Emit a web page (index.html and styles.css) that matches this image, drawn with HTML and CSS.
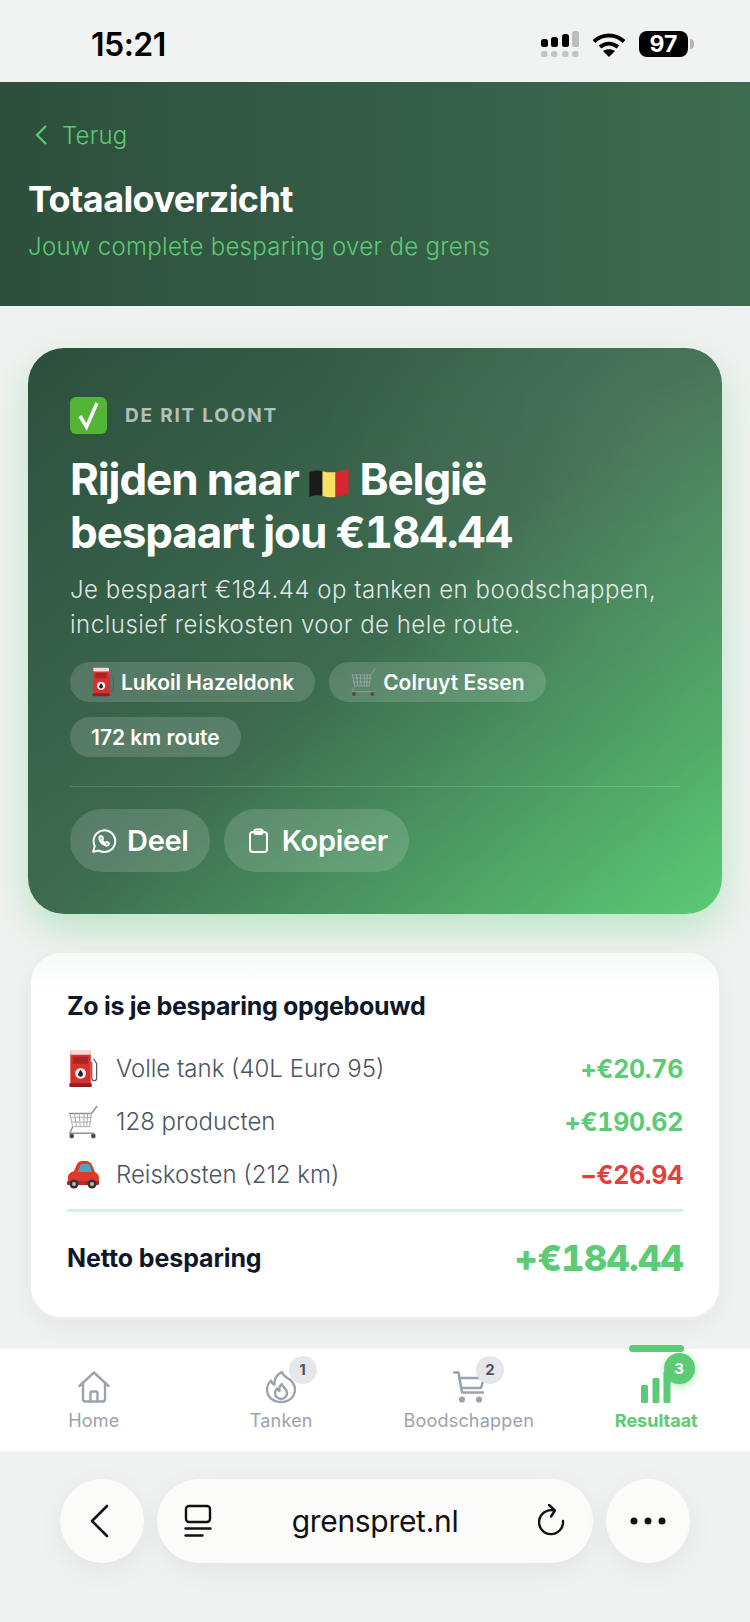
FILE: index.html
```html
<!DOCTYPE html>
<html lang="nl">
<head>
  <meta charset="UTF-8" />
  <meta name="viewport" content="width=device-width, initial-scale=1.0" />
  <title>Totaaloverzicht</title>
  <link rel="stylesheet" href="styles.css">
</head>
<body>
  <svg class="defs" width="0" height="0">
    <defs>
      <symbol id="pump" viewBox="0 0 32 40">
        <path d="M25 13v17a2.500 2.500 0 0 0 5 0V15l-3-5" fill="none" stroke="#56606a" stroke-width="1.300"/>
        <rect x="3" y="1" width="21" height="37" rx="2" fill="#d8302c"/>
        <rect x="3" y="1" width="21" height="5" rx="1" fill="#f1d9d6"/>
        <rect x="6" y="8" width="15" height="7" fill="#a92422"/>
        <rect x="2" y="35" width="23" height="4" rx="1" fill="#8f1e1d"/>
        <circle cx="13.500" cy="25" r="5.500" fill="#f5f2f0"/>
        <path d="M13.500 21.500c2 2.500 2.500 3.500 2.500 4.500a2.500 2.500 0 0 1-5 0c0-1 .5-2 2.500-4.500z" fill="#222"/>
      </symbol>
      <symbol id="cart" viewBox="0 0 34 36">
        <path d="M2 9h24l6-8" fill="none" stroke="#8b9096" stroke-width="1.500"/>
        <path d="M3 9l3 14h18l2-14M8 9l2 14M13 9l1 14M18 9l0 14M22 9l-1 14M4 13h22M4.500 18h20" fill="none" stroke="#a3a8ad" stroke-width="1"/>
        <path d="M6 23l-3 7h26" fill="none" stroke="#8b9096" stroke-width="1.500"/>
        <circle cx="5" cy="33" r="2.500" fill="#5a4a42"/>
        <circle cx="28" cy="33" r="2.500" fill="#5a4a42"/>
      </symbol>
    </defs>
  </svg>

  <div class="status-bar">
    <span class="clock">15:21</span>
    <div class="status-icons">
      <svg class="signal" width="38" height="26" viewBox="0 0 38 26">
        <rect x="0" y="8" width="7" height="8" rx="2.500" fill="#000"/>
        <rect x="10" y="6" width="7" height="10" rx="2.500" fill="#000"/>
        <rect x="21" y="3" width="7" height="13" rx="2.500" fill="#000"/>
        <rect x="31" y="0" width="7" height="16" rx="2.500" fill="#bdbdbd"/>
        <rect x="0" y="20" width="6.500" height="6" rx="2.500" fill="#c4c4c4"/>
        <rect x="10" y="20" width="6.500" height="6" rx="2.500" fill="#c4c4c4"/>
        <rect x="21" y="20" width="6.500" height="6" rx="2.500" fill="#c4c4c4"/>
        <rect x="31" y="20" width="6.500" height="6" rx="2.500" fill="#c4c4c4"/>
      </svg>
      <svg class="wifi" width="34" height="25" viewBox="0 0 34 25">
        <path d="M2 9.500C10.500 1.500 23.500 1.500 32 9.500" fill="none" stroke="#000" stroke-width="4"/>
        <path d="M8 15c5.500-4.500 12.500-4.500 18 0" fill="none" stroke="#000" stroke-width="4"/>
        <path d="M17 25l-6-6c3.500-2.500 8.500-2.500 12 0z" fill="#000"/>
      </svg>
      <div class="battery"><span class="battery-level">97</span><i class="battery-tip"></i></div>
    </div>
  </div>

  <header class="page-head">
    <a class="back-link">
      <svg width="15" height="22" viewBox="0 0 15 22"><path d="M12 2L3 11l9 9" fill="none" stroke="#5ccb75" stroke-width="2.200"/></svg>
      Terug
    </a>
    <h1>Totaaloverzicht</h1>
    <p>Jouw complete besparing over de grens</p>
  </header>

  <main class="content">
    <section class="hero">
      <div class="hero-tag">
        <svg width="37" height="37" viewBox="0 0 37 37">
          <rect width="37" height="37" rx="6" fill="#54b435"/>
          <path d="M10 19l6.500 11L27 6" fill="none" stroke="#fff" stroke-width="3.500"/>
        </svg>
        <span>DE RIT LOONT</span>
      </div>
      <h2>Rijden naar
        <svg class="flag" width="40" height="31" viewBox="0 0 38 30">
          <path d="M0 5c4-2 8-2 12.700-1v24C8 27 4 27 0 29z" fill="#1a1a1a"/>
          <path d="M12.700 4c4 1 8 1.500 12.600 1v24c-4.600.5-8.600 0-12.600-1z" fill="#f8e061"/>
          <path d="M25.300 5C30 4.500 34 3 38 2v24c-4 1-8 2.500-12.700 3z" fill="#d3282f"/>
        </svg>
        België<br>bespaart jou <span class="amount">€184.44</span></h2>
      <p class="hero-desc">Je bespaart €184.44 op tanken en boodschappen, inclusief reiskosten voor de hele route.</p>
      <div class="chips">
        <span class="chip"><svg width="24" height="34"><use href="#pump"/></svg>Lukoil Hazeldonk</span>
        <span class="chip"><svg width="27" height="34"><use href="#cart"/></svg>Colruyt Essen</span>
        <span class="chip">172 km route</span>
      </div>
      <div class="hero-actions">
        <button class="action" type="button">
          <svg width="26" height="26" viewBox="0 0 24 24" fill="none" stroke="#fff" stroke-width="1.800" stroke-linejoin="round" stroke-linecap="round"><path d="M2 22l1.500-5.300A10 10 0 1 1 7.400 20.800z"/><path d="M8.800 7.500c-1 .6-1.300 1.800-.8 3.200.9 2.500 3 4.500 5.300 5.300 1.400.5 2.700.1 3.200-.9l.3-1-2.400-1.200-1 1.200c-1.400-.5-2.700-1.700-3.300-3.200l1-1-1-2.400z"/></svg>
          Deel
        </button>
        <button class="action action-copy" type="button">
          <svg width="21" height="26" viewBox="0 0 21 26" fill="none" stroke="#fff" stroke-width="2" stroke-linejoin="round"><rect x="2" y="4" width="17" height="20" rx="3"/><rect x="6.500" y="1.500" width="8" height="4.500" rx="1.500"/></svg>
          Kopieer
        </button>
      </div>
    </section>

    <section class="breakdown">
      <h3>Zo is je besparing opgebouwd</h3>
      <ul class="rows">
        <li class="row">
          <svg class="row-icon" width="31" height="39"><use href="#pump"/></svg>
          <span class="row-label">Volle tank (40L Euro 95)</span>
          <span class="row-value">+€20.76</span>
        </li>
        <li class="row">
          <svg class="row-icon" width="31" height="36"><use href="#cart"/></svg>
          <span class="row-label">128 producten</span>
          <span class="row-value">+€190.62</span>
        </li>
        <li class="row">
          <svg class="row-icon" width="32" height="28" viewBox="0 0 32 28">
            <path d="M1 22v-6c0-3 3-5 6-6l3-7c1-2 3-3 5-3h4c3 0 5 2 6 4l3 7c2 1 4 3 4 6v5z" fill="#dd3a2a"/>
            <path d="M11 11l2-6c.5-1.500 1.500-2 3-2h4c1.500 0 2.500 .5 3 2l2 6z" fill="#4aa5c8"/>
            <rect x="0" y="20" width="32" height="4" rx="1" fill="#b32a20"/>
            <circle cx="7" cy="23" r="4.500" fill="#333"/><circle cx="7" cy="23" r="2" fill="#bbb"/>
            <circle cx="25" cy="23" r="4.500" fill="#333"/><circle cx="25" cy="23" r="2" fill="#bbb"/>
          </svg>
          <span class="row-label">Reiskosten (212 km)</span>
          <span class="row-value negative">−€26.94</span>
        </li>
      </ul>
      <div class="net">
        <span class="net-label">Netto besparing</span>
        <span class="net-value">+€184.44</span>
      </div>
    </section>
  </main>

  <nav class="tabbar">
    <a class="tab">
      <svg width="32" height="32" viewBox="0 0 32 32" fill="none" stroke="#9ca3af" stroke-width="2.400" stroke-linejoin="round" stroke-linecap="round"><path d="M1.500 15L16 1.500 30.500 15"/><path d="M5 12v16a2.500 2.500 0 0 0 2.500 2.500h17A2.500 2.500 0 0 0 27 28V12"/><path d="M12.500 30.500V22a1.500 1.500 0 0 1 1.500-1.500h4a1.500 1.500 0 0 1 1.500 1.500v8.500"/></svg>
      <span>Home</span>
    </a>
    <a class="tab">
      <span class="tab-badge">1</span>
      <svg width="30" height="32" viewBox="0 0 30 32" fill="none" stroke="#9ca3af" stroke-width="2.400" stroke-linejoin="round" stroke-linecap="round"><path d="M16 1c1 4 4 5 7 7 4 3 6 7 6 10.500C29 26 23 31 15 31S1 26 1 18.500c0-3.500 1.500-6.500 4-9 .5 2 1.500 3.500 3.500 4C8 8 11 3.500 16 1z"/><path d="M16 13c0 3 5 4 5 9a6 6 0 0 1-12 0c0-2 1-3.500 2.500-4.500.5 1.500 1 2 2 2.500-.5-2.500 .5-5.500 2.500-7z"/></svg>
      <span>Tanken</span>
    </a>
    <a class="tab">
      <span class="tab-badge">2</span>
      <svg width="32" height="32" viewBox="0 0 32 32" fill="none" stroke="#9ca3af" stroke-width="2.600" stroke-linejoin="round" stroke-linecap="round"><path d="M1 1.500h4.500L9 21.500h21"/><path d="M6 7h25l-3 10H8"/><circle cx="9" cy="28.500" r="1.800" fill="#9ca3af"/><circle cx="26" cy="28.500" r="1.800" fill="#9ca3af"/></svg>
      <span>Boodschappen</span>
    </a>
    <a class="tab tab-active">
      <i class="tab-marker"></i>
      <span class="tab-badge">3</span>
      <svg width="30" height="32" viewBox="0 0 30 32" fill="#5ccb75"><rect x="0" y="14" width="7" height="18" rx="1.500"/><rect x="11.500" y="7" width="7" height="25" rx="1.500"/><rect x="22.500" y="0" width="7" height="32" rx="1.500"/></svg>
      <span>Resultaat</span>
    </a>
  </nav>

  <div class="browser-bar">
    <button class="round-btn back-btn" type="button">
      <svg width="20" height="34" viewBox="0 0 20 34"><path d="M18 2L3 17l15 15" fill="none" stroke="#111" stroke-width="2.600" stroke-linecap="round" stroke-linejoin="round"/></svg>
    </button>
    <div class="url-pill">
      <svg width="28" height="34" viewBox="0 0 28 34" fill="none" stroke="#111" stroke-width="2.400" stroke-linecap="round"><rect x="2" y="2" width="24" height="16" rx="3"/><path d="M1.500 24.500h25M1.500 31.500h17"/></svg>
      <span class="url">grenspret.nl</span>
      <svg width="28" height="34" viewBox="0 0 28 34" fill="none" stroke="#111" stroke-width="2.400" stroke-linecap="round" stroke-linejoin="round"><path d="M16 6.500A12 12 0 1 0 25 17"/><path d="M11 1l6 5.500-4 6"/></svg>
    </div>
    <button class="round-btn" type="button">
      <svg width="36" height="10" viewBox="0 0 36 10" fill="#111"><circle cx="4" cy="5" r="3.500"/><circle cx="18" cy="5" r="3.500"/><circle cx="32" cy="5" r="3.500"/></svg>
    </button>
  </div>
</body>
</html>
```

FILE: styles.css
```css
* { box-sizing: border-box; }
body {
  margin: 0;
  width: 750px;
  height: 1622px;
  overflow: hidden;
  background: #f0f2f1;
  font-family: "Inter", "Liberation Sans", sans-serif;
  color: #0f172a;
}
.defs { position: absolute; }
h1, h2, h3, p, ul { margin: 0; padding: 0; }
ul { list-style: none; }

/* status bar */
.status-bar {
  height: 82px;
  padding: 6px 56px 0 91px;
  display: flex;
  justify-content: space-between;
  align-items: center;
  background: #f1f3f2;
}
.clock { font-size: 32px; font-weight: 600; color: #000; letter-spacing: -0.5px; }
.status-icons { display: flex; align-items: center; gap: 13px; }
.battery { display: flex; align-items: center; gap: 2px; }
.battery-level {
  width: 49px;
  height: 26px;
  border-radius: 8px;
  background: #000;
  color: #fff;
  font-size: 23px;
  font-weight: 700;
  line-height: 26px;
  text-align: center;
}
.battery-tip { width: 4px; height: 10px; border-radius: 0 4px 4px 0; background: #b5b5b5; }

/* header */
.page-head {
  height: 224px;
  padding: 40px 28px 0;
  background: linear-gradient(90deg, #2d4f3c, #3d6b50);
}
.back-link {
  display: flex;
  align-items: center;
  gap: 13px;
  padding-left: 6px;
  height: 26px;
  font-size: 24px;
  font-weight: 300;
  letter-spacing: 0.2px;
  color: #5ccb75;
}
.page-head h1 { margin-top: 29px; font-size: 36px; line-height: 44px; font-weight: 700; color: #fff; letter-spacing: -0.6px; }
.page-head p { margin-top: 10px; font-size: 24px; line-height: 32px; font-weight: 300; color: #5ccb75; letter-spacing: 0.3px; }

/* hero card */
.content { padding: 42px 28px 0; height: 1042px; }
.hero {
  height: 566px;
  padding: 49px 42px 0;
  border-radius: 36px;
  color: #fff;
  background:
    radial-gradient(circle at 90% 12%, rgba(255,255,255,.07), transparent 42%),
    linear-gradient(140deg, #2d4f3c 0%, #3d6b50 50%, #5ccb75 100%);
  box-shadow: 0 16px 40px rgba(92,203,117,.35);
}
.hero-tag { display: flex; align-items: center; gap: 18px; height: 37px; }
.hero-tag span { font-size: 19px; font-weight: 700; letter-spacing: 1.800px; color: rgba(255,255,255,.65); }
.hero h2 { margin-top: 19px; font-size: 44px; line-height: 53px; font-weight: 700; letter-spacing: -1.100px; }
.amount { font-variant-numeric: tabular-nums; }
.flag { vertical-align: -3px; margin: 0 1px; }
.hero-desc { margin-top: 13px; font-size: 24px; line-height: 35px; font-weight: 300; color: rgba(255,255,255,.85); letter-spacing: 0.5px; }
.chips { margin-top: 20px; display: flex; flex-wrap: wrap; gap: 15px 14px; padding-bottom: 29px; border-bottom: 1.500px solid rgba(255,255,255,.15); }
.chip {
  height: 40px;
  padding: 0 21px;
  display: flex;
  align-items: center;
  gap: 6px;
  border-radius: 20px;
  background: rgba(255,255,255,.15);
  font-size: 21px;
  font-weight: 600;
  letter-spacing: 0;
}
.hero-actions { margin-top: 22px; display: flex; gap: 14px; }
.action {
  height: 63px;
  padding: 0 21px;
  display: flex;
  align-items: center;
  gap: 10px;
  border: 0;
  border-radius: 32px;
  background: rgba(255,255,255,.15);
  color: #fff;
  font-family: inherit;
  font-size: 29px;
  font-weight: 600;
  letter-spacing: -0.3px;
}
.action-copy { padding: 0 21px 0 24px; gap: 13px; }

/* breakdown card */
.breakdown {
  margin: 39px 3px 0;
  height: 364px;
  padding: 37px 36px 0;
  border-radius: 30px;
  background: linear-gradient(#f5fbf7, #fff 40px);
  box-shadow: 0 0 0 3px #eceeed, 0 10px 24px rgba(0,0,0,.05);
}
.breakdown h3 { font-size: 25px; line-height: 32px; font-weight: 700; letter-spacing: -0.3px; }
.rows { margin-top: 20px; padding-bottom: 8px; border-bottom: 3px solid #d1f2df; }
.row { height: 53px; display: flex; align-items: center; }
.row-icon { flex: 0 0 auto; width: 32px; margin-right: 17px; }
.row-label { flex: 1; font-size: 24px; font-weight: 300; color: #4b5563; letter-spacing: 0; }
.row-value { font-size: 25px; font-weight: 700; color: #5ccb75; font-variant-numeric: tabular-nums; letter-spacing: -0.3px; }
.row-value.negative { color: #e53e3e; }
.net { margin-top: 24px; display: flex; justify-content: space-between; align-items: center; }
.net-label { font-size: 25px; font-weight: 700; letter-spacing: -0.1px; }
.net-value { font-size: 36px; font-weight: 800; color: #5ccb75; font-variant-numeric: tabular-nums; letter-spacing: -0.7px; }

/* tabs */
.tabbar {
  height: 102px;
  margin-top: 1px;
  display: grid;
  grid-template-columns: repeat(4, 1fr);
  background: #fff;
}
.tab {
  position: relative;
  padding-top: 22px;
  display: flex;
  flex-direction: column;
  align-items: center;
  gap: 7px;
  font-size: 18px;
  font-weight: 400;
  letter-spacing: 0.2px;
  color: #9ca3af;
}
.tab-badge {
  position: absolute;
  top: 7px;
  left: 101px;
  width: 28px;
  height: 28px;
  border-radius: 50%;
  background: #e5e7eb;
  color: #4b5563;
  font-size: 15px;
  font-weight: 700;
  line-height: 28px;
  text-align: center;
}
.tab-active { color: #5ccb75; font-weight: 700; letter-spacing: 0; }
.tab-active .tab-badge {
  top: 4px;
  left: 101px;
  width: 31px;
  height: 31px;
  line-height: 31px;
  background: #5ccb75;
  color: #fff;
  box-shadow: 0 2px 8px rgba(92,203,117,.5);
}
.tab-marker {
  position: absolute;
  top: -4px;
  left: 66px;
  width: 55px;
  height: 7px;
  border-radius: 4px;
  background: #5ccb75;
}

/* safari bar */
.browser-bar {
  height: 172px;
  padding: 28px 60px 0;
  display: flex;
  align-items: flex-start;
  justify-content: space-between;
  background: #f0f2f1;
}
.round-btn, .url-pill { height: 84px; background: #fbfcfa; box-shadow: 0 8px 28px rgba(0,0,0,.06); }
.round-btn {
  width: 84px;
  padding: 0;
  border: 0;
  border-radius: 50%;
  display: flex;
  align-items: center;
  justify-content: center;
}
.back-btn svg { margin-right: 6px; }
.url-pill {
  width: 436px;
  padding: 0 27px;
  border-radius: 42px;
  display: flex;
  align-items: center;
  justify-content: space-between;
}
.url { font-size: 30px; font-weight: 400; color: #111; letter-spacing: -0.3px; }
```
